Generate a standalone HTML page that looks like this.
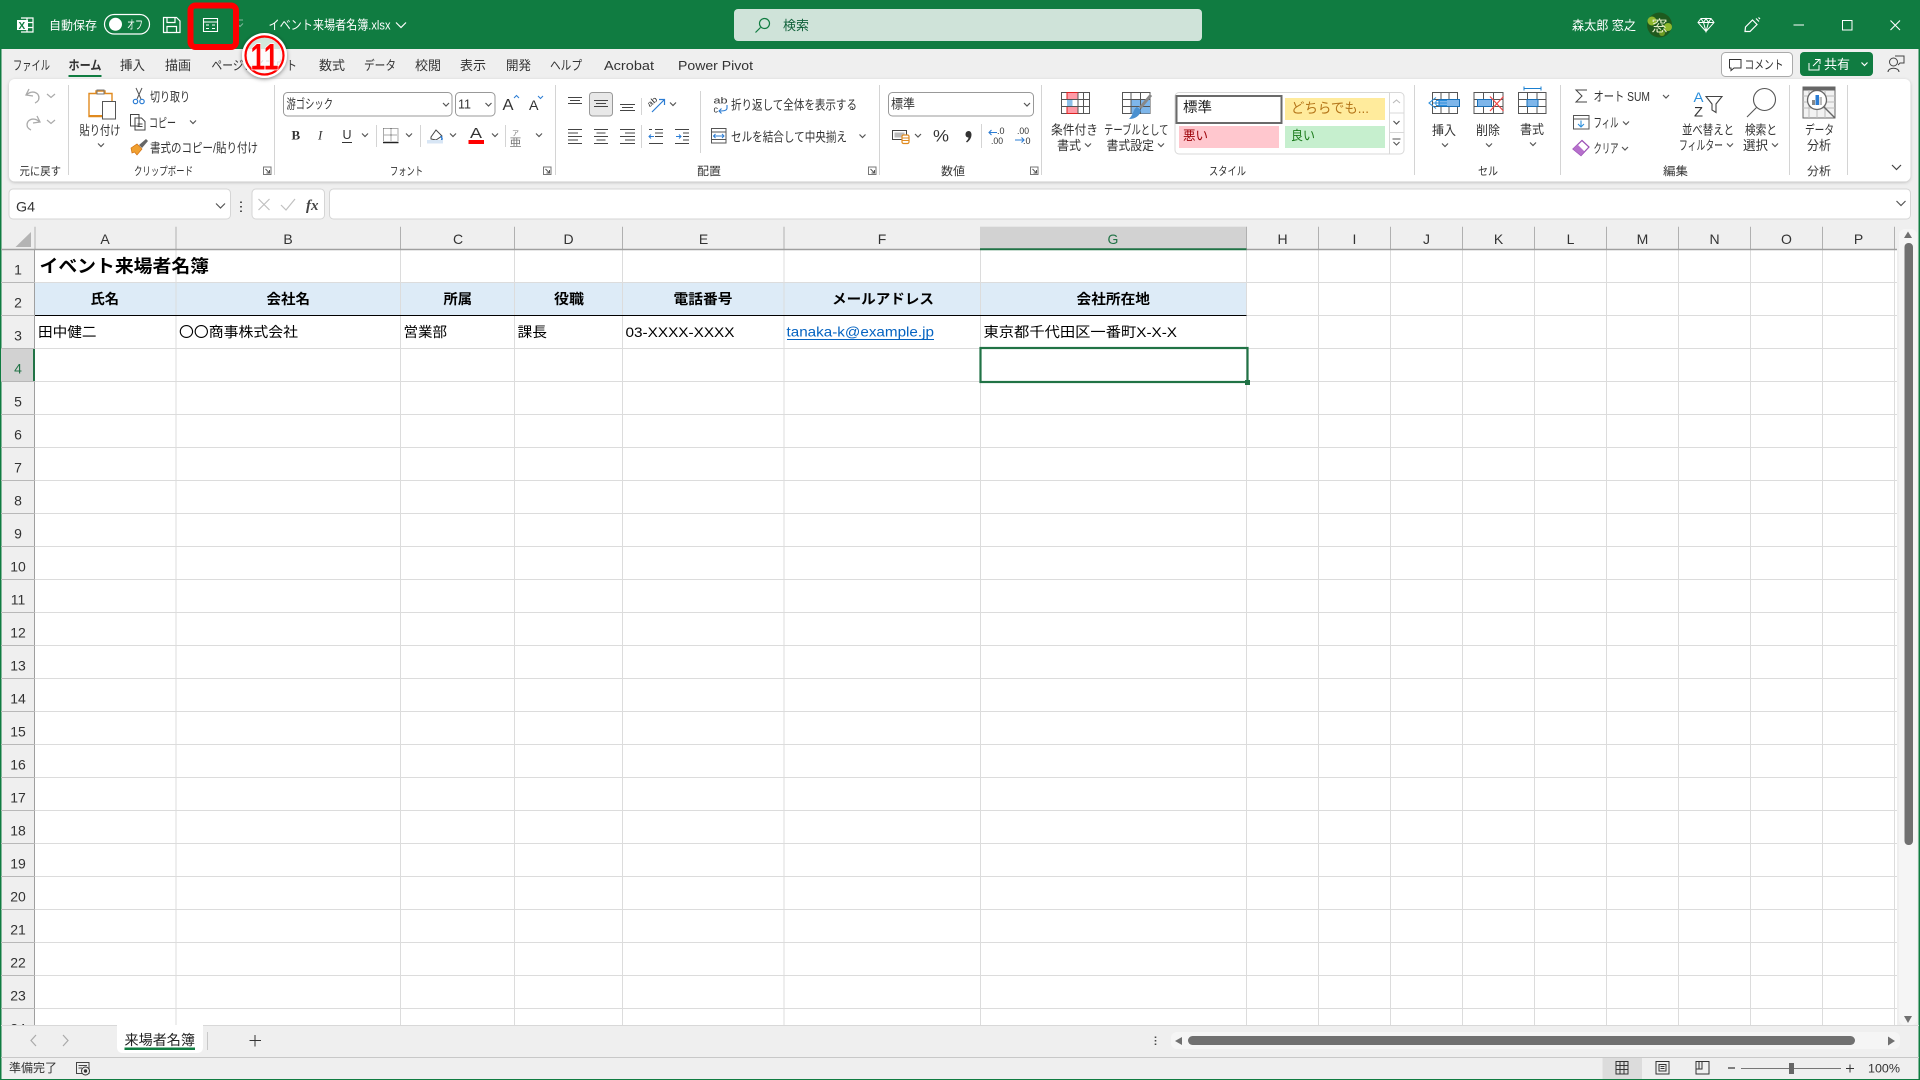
<!DOCTYPE html>
<html lang="ja"><head><meta charset="utf-8"><title>イベント来場者名簿.xlsx - Excel</title>
<style>
html,body{margin:0;padding:0;width:1920px;height:1080px;overflow:hidden;background:#efefef}
svg{display:block;position:absolute;left:0;top:0}
text{font-family:"Liberation Sans","Noto Sans CJK JP",sans-serif;font-size:13px;fill:#333}
.w text{fill:#fff}
.c text{fill:#000;font-size:14px}
.b text{font-weight:bold}
.h text{fill:#333;font-size:14px;text-anchor:middle}
.ic{fill:none;stroke:#555;stroke-width:1}
.chev{fill:none;stroke:#555;stroke-width:1.2}
.g text{font-size:11.5px}
</style></head><body>
<svg width="1920" height="1080" viewBox="0 0 1920 1080">
<defs>
<path id="c" class="chev" d="M-3-1.5 0 1.5 3-1.5"/>
<g id="launch"><path d="M.5.5H8V8H.5Z" fill="none" stroke="#777" stroke-width="1"/><path d="M2.500 2.500 6.500 6.500M3.500 6.500H6.500V3.500" fill="none" stroke="#555"/></g>
<filter id="sh" x="-30%" y="-30%" width="160%" height="160%"><feDropShadow dx="0" dy="1" stdDeviation="2" flood-color="#000" flood-opacity=".45"/></filter>
<filter id="rs" x="-5%" y="-20%" width="110%" height="140%"><feDropShadow dx="0" dy="1" stdDeviation="1.5" flood-color="#000" flood-opacity=".22"/></filter>
</defs>

<!-- frame / chrome -->
<rect width="1920" height="1080" fill="#efefef"/>
<rect width="1920" height="49" fill="#107c41"/>
<rect x="0" y="49" width="1.5" height="1031" fill="#107c41"/>
<rect x="1918.5" y="49" width="1.5" height="1031" fill="#107c41"/>
<rect y="1079" width="1920" height="1" fill="#107c41"/>

<!-- title bar -->
<g class="w">
<g fill="none" stroke="#fff" stroke-width="1.2"><path d="M21 18H33V32H21M27 18V32M27 22.5H33M27 27.5H33"/></g>
<rect x="17" y="20" width="11" height="10" fill="#fff"/><text x="18.5" y="29" style="fill:#107c41;font-size:10px;font-weight:bold">X</text>
<text x="49" y="29.5" textLength="48" lengthAdjust="spacingAndGlyphs" style="font-size:12px">自動保存</text>
<rect x="104.5" y="14.5" width="45" height="19.5" rx="9.7" fill="none" stroke="#fff" stroke-width="1.2"/>
<circle cx="115.5" cy="24.3" r="6.5" fill="#fff"/>
<text x="127" y="29" textLength="16" lengthAdjust="spacingAndGlyphs" style="font-size:12px">オフ</text>
<path d="M163.5 17.5H176.5L180 21V32.5H163.5ZM167 32.5V26.5H176.500V32.5M167 17.500V22.500H175V17.500" fill="none" stroke="#fff" stroke-width="1.200"/>
<path d="M203.500 18.500H217.500V31.500H203.500ZM203.500 22H217.500M206 25H209M212 25H215M206 28.500H209M212 28.500H215" fill="none" stroke="#fff" stroke-width="1.100"/>
<path d="M237 23.500 240 26.500 243 23.500M237 20H243" fill="none" stroke="#7fb89b" stroke-width="1"/>
<text x="268.500" y="29.500" textLength="122" lengthAdjust="spacingAndGlyphs">イベント来場者名簿.xlsx</text>
<path d="M396 22.500 401 27.500 406 22.500" fill="none" stroke="#fff" stroke-width="1.200"/>
</g>
<rect x="734" y="9" width="468" height="32" rx="4" fill="#cfe3d9"/>
<circle cx="764.500" cy="23.500" r="5" fill="none" stroke="#107c41" stroke-width="1.200"/><path d="M760.500 27.500 755.500 32.500" stroke="#107c41" stroke-width="1.200"/>
<text x="783" y="30" textLength="26" lengthAdjust="spacingAndGlyphs" style="fill:#10613a">検索</text>
<g class="w">
<text x="1572" y="30" textLength="64" lengthAdjust="spacingAndGlyphs">森太郎 窓之</text>
</g>
<circle cx="1659.500" cy="25" r="12.500" fill="#1e5a1e"/><circle cx="1652" cy="21" r="4.500" fill="#8db82e"/><circle cx="1668" cy="27" r="4" fill="#8db82e"/><circle cx="1662" cy="33" r="3" fill="#6b9a22"/>
<text x="1651.500" y="31" textLength="16" lengthAdjust="spacingAndGlyphs" style="fill:#e6efc8;font-size:15px">窓</text>
<path d="M1701 18.500H1711L1714 22.500 1706 31.500 1698 22.500ZM1698 22.500H1714M1703.500 22.500 1706 31.500 1708.500 22.500M1701 18.500 1703.500 22.500 1706 18.500 1708.500 22.500 1711 18.500" fill="none" stroke="#fff" stroke-width="1"/>
<path d="M1745 31.500 1745.500 27 1752.500 20 1757 24.500 1750 31.500ZM1756 18.500 1759 21.500M1758.500 17.500 1760 19" fill="none" stroke="#fff" stroke-width="1.200"/>
<path d="M1793.500 25H1804" stroke="#fff" stroke-width="1"/>
<rect x="1842.500" y="20.500" width="9.500" height="9.500" fill="none" stroke="#fff" stroke-width="1"/>
<path d="M1890.500 20.500 1900 30M1900 20.500 1890.500 30" stroke="#fff" stroke-width="1.100"/>

<!-- tabs -->
<g>
<text x="13" y="70" textLength="37" lengthAdjust="spacingAndGlyphs">ファイル</text>
<text x="68.500" y="70" textLength="33" lengthAdjust="spacingAndGlyphs" style="font-weight:bold">ホーム</text>
<rect x="68.500" y="75" width="33" height="2" fill="#107c41"/>
<text x="120" y="70" textLength="25" lengthAdjust="spacingAndGlyphs">挿入</text>
<text x="165" y="70" textLength="26" lengthAdjust="spacingAndGlyphs">描画</text>
<text x="211.500" y="70" textLength="85.500" lengthAdjust="spacingAndGlyphs">ページレイアウト</text>
<text x="319" y="70" textLength="26" lengthAdjust="spacingAndGlyphs">数式</text>
<text x="364" y="70" textLength="32" lengthAdjust="spacingAndGlyphs">データ</text>
<text x="415" y="70" textLength="26" lengthAdjust="spacingAndGlyphs">校閲</text>
<text x="460" y="70" textLength="26" lengthAdjust="spacingAndGlyphs">表示</text>
<text x="506" y="70" textLength="25" lengthAdjust="spacingAndGlyphs">開発</text>
<text x="550" y="70" textLength="32" lengthAdjust="spacingAndGlyphs">ヘルプ</text>
<text x="604" y="70" textLength="50" lengthAdjust="spacingAndGlyphs">Acrobat</text>
<text x="678" y="70" textLength="75" lengthAdjust="spacingAndGlyphs">Power Pivot</text>
</g>
<rect x="1721.500" y="52.500" width="71" height="24" rx="4" fill="#fff" stroke="#aaa"/>
<path d="M1729.500 59.500H1741V68H1734L1731 70.500V68H1729.500Z" fill="none" stroke="#333"/>
<text x="1744.500" y="69" textLength="39" lengthAdjust="spacingAndGlyphs" style="font-size:12.500px">コメント</text>
<rect x="1800" y="52" width="73" height="24" rx="4" fill="#107c41"/>
<path d="M1809 63V70H1819V65M1813 66 1819 60M1815 59.500H1820V64" fill="none" stroke="#fff"/>
<text x="1824" y="69" textLength="26" lengthAdjust="spacingAndGlyphs" style="fill:#fff">共有</text>
<path d="M1861.500 62.500 1864.500 65.500 1867.500 62.500" fill="none" stroke="#fff" stroke-width="1.200"/>
<circle cx="1893.500" cy="62" r="4" fill="none" stroke="#444"/><path d="M1888 72C1888 67 1899 67 1899 72" fill="none" stroke="#444"/><path d="M1895 56H1904V63H1900L1898 65" fill="none" stroke="#444"/>

<!-- ribbon -->
<rect x="9" y="79" width="1901.500" height="102.500" rx="6" fill="#fff" filter="url(#rs)"/>
<g stroke="#d4d4d4" stroke-width="1">
<path d="M68.500 85V175M274.500 85V175M555.500 85V175M879.500 85V175M1041.500 85V175M1414.500 85V175M1560.500 85V175M1789.500 85V175M1847.500 85V175"/>
<path d="M376.500 125V147M420.500 125V147M505.500 125V147M641.500 98V115M641.500 125V148M700.500 91V153M981.500 124V148"/>
</g>
<g class="g">
<text x="19.500" y="175" textLength="41.500" lengthAdjust="spacingAndGlyphs">元に戻す</text>
<text x="134" y="175" textLength="59" lengthAdjust="spacingAndGlyphs">クリップボード</text>
<text x="390" y="175" textLength="33" lengthAdjust="spacingAndGlyphs">フォント</text>
<text x="697" y="175" textLength="24" lengthAdjust="spacingAndGlyphs">配置</text>
<text x="941" y="175" textLength="24" lengthAdjust="spacingAndGlyphs">数値</text>
<text x="1209" y="175" textLength="37" lengthAdjust="spacingAndGlyphs">スタイル</text>
<text x="1478" y="175" textLength="20" lengthAdjust="spacingAndGlyphs">セル</text>
<text x="1663" y="175" textLength="25" lengthAdjust="spacingAndGlyphs">編集</text>
<text x="1807" y="175" textLength="24" lengthAdjust="spacingAndGlyphs">分析</text>
</g>
<use href="#launch" x="263" y="166.500"/><use href="#launch" x="543" y="166.500"/><use href="#launch" x="868" y="166.500"/><use href="#launch" x="1030" y="166.500"/>

<!-- undo group -->
<path d="M29 89 26 95 33 96M26.500 95C32 89 41 93 38.500 100 37.500 102 36 102.500 35 103" fill="none" stroke="#aaa" stroke-width="1.300"/>
<path d="M37 116 40 122 33 123M39.500 122C34 116 25 120 27.500 127 28.500 129 30 129.500 31 130" fill="none" stroke="#aaa" stroke-width="1.300"/>
<path d="M47 94 51 97.500 55 94M47 120 51 123.500 55 120" fill="none" stroke="#aaa" stroke-width="1.200"/>

<!-- clipboard -->
<path d="M89 93.500H96V91H105V93.500H112V102H103V116.500H89Z" fill="#fff" stroke="#e08a1e" stroke-width="1.400"/>
<rect x="88.500" y="115" width="15" height="1.800" fill="#e08a1e"/>
<path d="M97 90H104V94H97Z" fill="none" stroke="#777"/>
<rect x="102.500" y="101.500" width="13" height="17.500" fill="#fff" stroke="#555"/>
<text x="79.500" y="135" textLength="41" lengthAdjust="spacingAndGlyphs">貼り付け</text>
<use href="#c" x="101" y="145"/>
<path d="M136 88 141 99M142 88 137 99" stroke="#555" fill="none"/><circle cx="135.500" cy="101.500" r="2.200" fill="none" stroke="#2b7cd3" stroke-width="1.200"/><circle cx="142" cy="101.500" r="2.200" fill="none" stroke="#2b7cd3" stroke-width="1.200"/>
<text x="150" y="101.500" textLength="40" lengthAdjust="spacingAndGlyphs">切り取り</text>
<path d="M130.500 114.500H139V126H130.500ZM135 118H141.500L145 121.500V130H135Z" fill="#fff" stroke="#444"/><path d="M137.500 124H142.500M137.500 126.500H142.500" stroke="#444"/>
<text x="149" y="127.500" textLength="27" lengthAdjust="spacingAndGlyphs">コピー</text>
<use href="#c" x="193" y="122"/>
<path d="M139 145 146 139 148 141 142 148Z" fill="#666"/><path d="M131 148 137 144 142 149 137 155 134.500 152 132 153Z" fill="#f0a030" stroke="#d07010" stroke-width=".7"/>
<text x="150" y="152.500" textLength="108" lengthAdjust="spacingAndGlyphs">書式のコピー/貼り付け</text>

<!-- font -->
<rect x="283.500" y="92.500" width="168.500" height="23.500" rx="4" fill="#fff" stroke="#999"/>
<text x="286.500" y="108.500" textLength="46.500" lengthAdjust="spacingAndGlyphs">游ゴシック</text>
<use href="#c" x="446" y="104.500"/>
<rect x="455.500" y="92.500" width="39.500" height="23.500" rx="4" fill="#fff" stroke="#999"/>
<text x="458" y="108.500" textLength="13" lengthAdjust="spacingAndGlyphs">11</text>
<use href="#c" x="488.500" y="104.500"/>
<text x="502.500" y="110" textLength="11" lengthAdjust="spacingAndGlyphs" style="font-size:16px">A</text>
<path d="M514 98 516.500 95.500 519 98" fill="none" stroke="#2b7cd3"/>
<text x="529" y="110" textLength="9.500" lengthAdjust="spacingAndGlyphs" style="font-size:13.500px">A</text>
<path d="M538 96 540.500 98.500 543 96" fill="none" stroke="#2b7cd3"/>
<text x="291.500" y="139.500" style="font-size:13px;font-weight:bold;font-family:'Liberation Serif',serif">B</text>
<text x="318" y="139.500" style="font-size:13px;font-style:italic;font-family:'Liberation Serif',serif">I</text>
<text x="342.500" y="139" style="font-size:12.500px">U</text><path d="M342 142.500H352" stroke="#333"/>
<use href="#c" x="365" y="135"/>
<path d="M383.500 128.500H398M383.500 128.500V141M398 128.500V141M391 128.500V141M383.500 135H398" stroke="#555" stroke-dasharray="1 1" fill="none"/><path d="M383 142.500H398.500" stroke="#222" stroke-width="1.500"/>
<use href="#c" x="409" y="135"/>
<path d="M431 137 436 130 442 136 436 140 431 139Z" fill="#fff" stroke="#444"/><path d="M440.500 136C442.500 138 442.500 139.500 441 140" fill="none" stroke="#2b7cd3" stroke-width="1.500"/><rect x="427" y="140" width="16" height="3.500" fill="#d8e6f5"/>
<use href="#c" x="453" y="135"/>
<text x="470" y="138" textLength="12" lengthAdjust="spacingAndGlyphs" style="font-size:15px">A</text><rect x="468.500" y="140" width="15.500" height="4" fill="#f00"/>
<use href="#c" x="495" y="135"/>
<text x="512" y="135.500" style="font-size:7px;fill:#777">ア</text><text x="509.500" y="146" textLength="12" style="font-size:11px;fill:#777" lengthAdjust="spacingAndGlyphs">亜</text>
<use href="#c" x="539" y="135"/>

<!-- alignment -->
<rect x="589.500" y="92.500" width="23" height="23.500" rx="3" fill="#e8e8e8" stroke="#999"/>
<g stroke="#444" stroke-width="1"><path d="M568 97.500H582M570 100.500H580M568 103.500H582"/><path d="M594 100.500H608M596 103.500H606M594 106.500H608"/><path d="M620 104.500H635M622 107.500H633M620 110.500H635"/>
<path d="M568 129.500H582M568 133H578M568 136.500H582M568 140H578M568 143.500H582"/><path d="M594 129.500H608M596.500 133H605.500M594 136.500H608M596.500 140H605.500M594 143.500H608"/><path d="M620 129.500H635M625 133H635M620 136.500H635M625 140H635M620 143.500H635"/>
<path d="M655 129.500H663M655 133H663M655 136.500H663M649 143.500H663M649 129.500H652M675 129.500H689M683 133H689M683 136.500H689M683 140H689M675 143.500H689"/></g>
<path d="M649 136.500H654M651 134.500 649 136.500 651 138.500M676 136.500H681M679 134.500 681 136.500 679 138.500" fill="none" stroke="#2b7cd3"/>
<text x="648" y="105" transform="rotate(-40 652 104)" style="font-size:8px" textLength="11" lengthAdjust="spacingAndGlyphs">ab</text>
<path d="M652 112 664 100M659 99.500H664.500V105" fill="none" stroke="#2b7cd3" stroke-width="1.200"/>
<use href="#c" x="673" y="104"/>
<text x="713.500" y="103.500" style="font-size:9px" textLength="14" lengthAdjust="spacingAndGlyphs">ab</text><text x="713.500" y="112.500" style="font-size:9px">c</text>
<path d="M727 105V108C727 111 723 111 719 111M721.500 108.500 719 111 721.500 113.500" fill="none" stroke="#2b7cd3" stroke-width="1.100"/>
<text x="731" y="109.500" textLength="126" lengthAdjust="spacingAndGlyphs">折り返して全体を表示する</text>
<rect x="711.500" y="128.500" width="14.500" height="14.500" fill="none" stroke="#555"/><path d="M711.500 132H726M711.500 139.500H726" stroke="#555"/><path d="M713.500 136H724M715.500 134 713.500 136 715.500 138M722 134 724 136 722 138" fill="none" stroke="#2b7cd3"/>
<text x="731" y="141.500" textLength="116" lengthAdjust="spacingAndGlyphs">セルを結合して中央揃え</text>
<use href="#c" x="862.500" y="136"/>

<!-- number -->
<rect x="888.500" y="92.500" width="145" height="23.500" rx="4" fill="#fff" stroke="#999"/>
<text x="891" y="108.500" textLength="24" lengthAdjust="spacingAndGlyphs">標準</text>
<use href="#c" x="1027" y="104.500"/>
<rect x="892.500" y="130.500" width="14" height="9" fill="none" stroke="#444"/><rect x="894.500" y="132.500" width="10" height="5" fill="#bbb"/><rect x="902" y="135" width="7" height="8.500" rx="1.500" fill="#fff" stroke="#e08a1e" stroke-width="1.200"/><path d="M902 138H909M902 140.500H909" stroke="#e08a1e"/>
<use href="#c" x="918" y="135.500"/>
<text x="933" y="141.500" textLength="16" lengthAdjust="spacingAndGlyphs" style="font-size:17px">%</text>
<path d="M967 131.500C969.500 130 971.500 132 971.500 134.500 971.500 138 969.500 140.500 967 142.500L966 141.500C967.500 140 968.500 139 968.500 137.500 966.500 137.500 965.500 136 965.500 134.500 965.500 133 966 132 967 131.500Z" fill="#333"/>
<path d="M989 132.500H997M991.500 130 989 132.500 991.500 135M1015 140H1024M1021.500 137.500 1024 140 1021.500 142.500" fill="none" stroke="#2b7cd3" stroke-width="1.100"/>
<text x="997" y="134" style="font-size:9px">.0</text><text x="991" y="144" style="font-size:9px" textLength="12" lengthAdjust="spacingAndGlyphs">.00</text>
<text x="1017" y="134" style="font-size:9px" textLength="12" lengthAdjust="spacingAndGlyphs">.00</text><text x="1023" y="144" style="font-size:9px">.0</text>

<!-- conditional & table -->
<g>
<rect x="1061.500" y="92.500" width="28" height="21" fill="#fff" stroke="#555"/>
<rect x="1067" y="92.500" width="11" height="7" fill="#ff9aa6" stroke="#d22"/><rect x="1067" y="99.500" width="5.500" height="7" fill="#8cc0ea"/><rect x="1067" y="106.500" width="11" height="7" fill="#ff9aa6" stroke="#d22"/>
<path d="M1078 92.500V113.500M1083.500 92.500V113.500M1061.500 99.500H1089.500M1061.500 106.500H1089.500" stroke="#555" fill="none"/>
<text x="1051" y="134.500" textLength="47" lengthAdjust="spacingAndGlyphs">条件付き</text>
<text x="1057" y="150" textLength="24" lengthAdjust="spacingAndGlyphs">書式</text><use href="#c" x="1088" y="145"/>
<rect x="1122.500" y="92.500" width="27.500" height="21" fill="#fff" stroke="#555"/>
<rect x="1131" y="99.500" width="19" height="14" fill="#7eb6ea"/>
<path d="M1131 92.500V113.500M1140.500 92.500V113.500M1122.500 99.500H1150M1122.500 106.500H1150" stroke="#555" fill="none"/>
<path d="M1140 108 1151 95" stroke="#888" stroke-width="3"/><path d="M1129 119C1135 119 1140 116 1141 110L1137 107C1133 109 1134 114 1129 119Z" fill="#4a90d0"/>
<text x="1104" y="134.500" textLength="64.500" lengthAdjust="spacingAndGlyphs">テーブルとして</text>
<text x="1106.500" y="150" textLength="47.500" lengthAdjust="spacingAndGlyphs">書式設定</text><use href="#c" x="1161" y="145"/>
</g>
<!-- styles gallery -->
<rect x="1175" y="92.500" width="229" height="61.500" rx="4" fill="#fff" stroke="#d8d8d8"/>
<rect x="1176.500" y="96" width="105" height="27" fill="#fff" stroke="#6a6a6a" stroke-width="2"/>
<text x="1183" y="112" textLength="29" lengthAdjust="spacingAndGlyphs" style="font-size:14px;fill:#222">標準</text>
<rect x="1179" y="126" width="100" height="22" fill="#ffc7ce"/>
<text x="1183" y="140" textLength="25" lengthAdjust="spacingAndGlyphs" style="fill:#9c0006">悪い</text>
<rect x="1285" y="98" width="100" height="22" fill="#ffeb9c"/>
<text x="1291" y="113" textLength="78" lengthAdjust="spacingAndGlyphs" style="fill:#b5761a;font-size:14px">どちらでも...</text>
<rect x="1285" y="126" width="100" height="22" fill="#c6efce"/>
<text x="1291" y="140" textLength="24" lengthAdjust="spacingAndGlyphs" style="fill:#1a7a1a">良い</text>
<path d="M1389.500 92.500V154M1389.500 113H1404M1389.500 132.500H1404" stroke="#d8d8d8" fill="none"/>
<path d="M1393 103 1396.500 100 1400 103" stroke="#bbb" fill="none" stroke-width="1.100"/>
<use href="#c" x="1396.500" y="122.500"/>
<path d="M1392.500 139H1400.500M1393.500 142 1396.500 145 1399.500 142" stroke="#555" fill="none" stroke-width="1.100"/>

<!-- cells group -->
<g fill="none" stroke="#555">
<path d="M1432.500 92.500H1457.500V113.500H1432.500ZM1441 92.500V113.500M1449 92.500V113.500M1432.500 99.500H1457.500M1432.500 106.500H1457.500"/>
<rect x="1439" y="99.500" width="20.500" height="7" fill="#7eb6ea" stroke="#1a6fb5"/>
<path d="M1447 103H1433M1436 97.500 1429 103 1436 108.500M1436 101V105M1436 100.500H1447M1436 105.500H1447" stroke="#2b8fdc" stroke-width="1.100"/>
<path d="M1474 92.500H1503V113.500H1474ZM1483.500 92.500V113.500M1493.500 92.500V113.500M1474 99.500H1503M1474 106.500H1503"/>
<rect x="1477.500" y="99.500" width="14" height="7" fill="#7eb6ea" stroke="#1a6fb5"/>
<path d="M1490 96.500 1503.500 111M1503.500 96.500 1490 111" stroke="#f04545" stroke-width="1.200"/>
<path d="M1518.500 92.500H1546V113.500H1518.500ZM1527.500 92.500V113.500M1537 92.500V113.500M1518.500 99.500H1546M1518.500 106.500H1546"/>
<rect x="1527" y="99.500" width="11" height="7" fill="#7eb6ea" stroke="#1a6fb5"/>
<path d="M1524 88.500H1541M1524 86.500V90.500M1541 86.500V90.500" stroke="#1a7fd0"/>
</g>
<text x="1432" y="135" textLength="24" lengthAdjust="spacingAndGlyphs">挿入</text><use href="#c" x="1445" y="145"/>
<text x="1476" y="135" textLength="24" lengthAdjust="spacingAndGlyphs">削除</text><use href="#c" x="1489" y="145"/>
<text x="1520" y="134" textLength="24" lengthAdjust="spacingAndGlyphs">書式</text><use href="#c" x="1533" y="144"/>

<!-- edit group -->
<path d="M1587 90H1576L1582 96 1576 102H1587" fill="none" stroke="#444"/>
<text x="1593.500" y="101" textLength="56.500" lengthAdjust="spacingAndGlyphs">オート SUM</text><use href="#c" x="1666" y="96.500"/>
<rect x="1573.500" y="115.500" width="15.500" height="13.500" fill="none" stroke="#555"/><path d="M1573.500 119H1589" stroke="#555"/><path d="M1581 120.500V127M1578 124 1581 127 1584 124" fill="none" stroke="#2b8fdc" stroke-width="1.100"/>
<text x="1593.500" y="127.500" textLength="25" lengthAdjust="spacingAndGlyphs">フィル</text><use href="#c" x="1626" y="123"/>
<path d="M1573 149 1582 140.500 1589 147 1581 155.500Z" fill="#fff" stroke="#9b4fb5" stroke-width="1.200"/><path d="M1573 149 1577.500 144.500 1584.500 151.500 1581 155.500Z" fill="#b670cc"/>
<text x="1593.500" y="153" textLength="25" lengthAdjust="spacingAndGlyphs">クリア</text><use href="#c" x="1625" y="148.500"/>
<text x="1693.500" y="102" textLength="10" lengthAdjust="spacingAndGlyphs" style="font-size:14px;fill:#2b8fdc">A</text>
<text x="1694" y="116.500" textLength="9" lengthAdjust="spacingAndGlyphs" style="font-size:14px;fill:#333">Z</text>
<path d="M1706 96.500H1722L1716 104V112.500L1712 110V104Z" fill="none" stroke="#444" stroke-width="1.100"/>
<text x="1682" y="134.500" textLength="52" lengthAdjust="spacingAndGlyphs">並べ替えと</text>
<text x="1679" y="150" textLength="44" lengthAdjust="spacingAndGlyphs">フィルター</text><use href="#c" x="1730" y="145"/>
<circle cx="1764.500" cy="99.500" r="11" fill="none" stroke="#555" stroke-width="1.100"/><path d="M1756.500 107.500 1747 117" stroke="#555" stroke-width="1.100"/>
<text x="1745" y="134.500" textLength="32" lengthAdjust="spacingAndGlyphs">検索と</text>
<text x="1743" y="150" textLength="25" lengthAdjust="spacingAndGlyphs">選択</text><use href="#c" x="1775" y="145"/>
<!-- analysis -->
<rect x="1803" y="87" width="32" height="31" fill="#f2f2f2" stroke="#666"/><rect x="1803" y="87" width="32" height="3.500" fill="#666"/>
<path d="M1803 96H1835M1803 102H1835M1803 108H1835M1809 90V118M1817 90V118M1825 90V118" stroke="#bbb"/>
<circle cx="1817" cy="100" r="9.500" fill="#fff" stroke="#666" stroke-width="1.300"/>
<rect x="1812" y="100" width="3" height="5" fill="#888"/><rect x="1815.500" y="95" width="3.500" height="10" fill="#2b7cd3"/><rect x="1819.500" y="97" width="2.500" height="8" fill="#bbb"/>
<path d="M1824 107 1835 118" stroke="#666" stroke-width="1.400"/>
<text x="1805" y="134.500" textLength="29" lengthAdjust="spacingAndGlyphs">データ</text>
<text x="1807" y="150" textLength="24" lengthAdjust="spacingAndGlyphs">分析</text>
<path d="M1892 165 1896.500 169.500 1901 165" fill="none" stroke="#444" stroke-width="1.200"/>

<!-- formula bar -->
<rect x="9" y="189" width="221.500" height="30" rx="4" fill="#fff" stroke="#d5d5d5"/>
<text x="16" y="211.500" textLength="19" lengthAdjust="spacingAndGlyphs" style="font-size:14px">G4</text>
<path d="M216 203.500 220.500 208 225 203.500" fill="none" stroke="#555" stroke-width="1.200"/>
<path d="M241 201.500V203M241 206V207.500M241 210.500V212" stroke="#444" stroke-width="1.800"/>
<rect x="252" y="189" width="72.500" height="30" rx="4" fill="#fff" stroke="#d5d5d5"/>
<path d="M258.500 199 269.500 210M269.500 199 258.500 210" stroke="#c0c0c0" stroke-width="1.200"/>
<path d="M281 205 286 210 295 199" fill="none" stroke="#c0c0c0" stroke-width="1.200"/>
<text x="306" y="210" style="font-family:'Liberation Serif',serif;font-style:italic;font-weight:bold;font-size:15px;fill:#444">fx</text>
<rect x="329.500" y="189" width="1581" height="30" rx="4" fill="#fff" stroke="#d5d5d5"/>
<path d="M1896.500 201 1901 205.500 1905.500 201" fill="none" stroke="#555" stroke-width="1.200"/>

<!-- sheet -->
<rect x="35" y="250" width="1862" height="775" fill="#fff"/>
<rect x="35" y="283" width="1211.500" height="32" fill="#ddebf7"/>
<rect x="1" y="348.500" width="34" height="33" fill="#d2d2d2"/>
<rect x="980" y="226.700" width="266.500" height="23.300" fill="#d2d2d2"/>
<!-- grid -->
<path d="M176 250V1025M400.500 250V1025M514.500 250V1025M622.500 250V1025M784 250V1025M980.500 250V1025M1246.500 250V1025M1318.500 250V1025M1390.500 250V1025M1462.500 250V1025M1534.500 250V1025M1606.500 250V1025M1678.500 250V1025M1750.500 250V1025M1822.500 250V1025M1894.500 250V1025" stroke="#dcdcdc" stroke-width="1" fill="none"/>
<path d="M35 282.500H1897M1246 315.500H1897M35 348.500H1897M35 381.500H1897M35 414.500H1897M35 447.500H1897M35 480.500H1897M35 513.500H1897M35 546.500H1897M35 579.500H1897M35 612.500H1897M35 645.500H1897M35 678.500H1897M35 711.500H1897M35 744.500H1897M35 777.500H1897M35 810.500H1897M35 843.500H1897M35 876.500H1897M35 909.500H1897M35 942.500H1897M35 975.500H1897M35 1008.500H1897" stroke="#dcdcdc" stroke-width="1" fill="none"/>
<path d="M35 315.500H1246.500" stroke="#000" stroke-width="1"/>
<!-- headers -->
<path d="M35 250V226.700M176 226.700V250M400.500 226.700V250M514.500 226.700V250M622.500 226.700V250M784 226.700V250M1246.500 226.700V250M1318.500 226.700V250M1390.500 226.700V250M1462.500 226.700V250M1534.500 226.700V250M1606.500 226.700V250M1678.500 226.700V250M1750.500 226.700V250M1822.500 226.700V250M1894.500 226.700V250" stroke="#b0b0b0" fill="none"/>
<path d="M1 249.500H980M1246.500 249.500H1897" stroke="#9f9f9f" stroke-width="1.500"/>
<path d="M980 249.300H1246.500" stroke="#217346" stroke-width="2"/>
<path d="M34.500 250V1025" stroke="#9f9f9f"/>
<path d="M34 348.500V381.500" stroke="#217346" stroke-width="2"/>
<path d="M1 282.500H35M1 315.500H35M1 348.500H35M1 381.500H35M1 414.500H35M1 447.500H35M1 480.500H35M1 513.500H35M1 546.500H35M1 579.500H35M1 612.500H35M1 645.500H35M1 678.500H35M1 711.500H35M1 744.500H35M1 777.500H35M1 810.500H35M1 843.500H35M1 876.500H35M1 909.500H35M1 942.500H35M1 975.500H35M1 1008.500H35" stroke="#b8b8b8"/>
<path d="M31 232V247H15.500Z" fill="#b4b4b4"/>
<g class="h">
<text x="105" y="244">A</text><text x="288" y="244">B</text><text x="458" y="244">C</text><text x="568.500" y="244">D</text><text x="703.500" y="244">E</text><text x="882" y="244">F</text><text x="1113" y="244" style="fill:#217346">G</text>
<text x="1282.500" y="244">H</text><text x="1354.500" y="244">I</text><text x="1426.500" y="244">J</text><text x="1498.500" y="244">K</text><text x="1570.500" y="244">L</text><text x="1642.500" y="244">M</text><text x="1714.500" y="244">N</text><text x="1786.500" y="244">O</text><text x="1858.500" y="244">P</text>
<text x="18" y="274.500">1</text><text x="18" y="307.500">2</text><text x="18" y="340.500">3</text><text x="18" y="373.500" style="fill:#217346">4</text><text x="18" y="406.500">5</text><text x="18" y="439.500">6</text><text x="18" y="472.500">7</text><text x="18" y="505.500">8</text><text x="18" y="538.500">9</text><text x="18" y="571.500">10</text><text x="18" y="604.500">11</text><text x="18" y="637.500">12</text><text x="18" y="670.500">13</text><text x="18" y="703.500">14</text><text x="18" y="736.500">15</text><text x="18" y="769.500">16</text><text x="18" y="802.500">17</text><text x="18" y="835.500">18</text><text x="18" y="868.500">19</text><text x="18" y="901.500">20</text><text x="18" y="934.500">21</text><text x="18" y="967.500">22</text><text x="18" y="1000.500">23</text><text x="18" y="1033.500">24</text>
</g>
<!-- cell contents -->
<text x="39.500" y="272.500" textLength="169.500" lengthAdjust="spacingAndGlyphs" style="font-size:18px;font-weight:bold;fill:#000">イベント来場者名簿</text>
<g class="c b">
<text x="90.500" y="304" textLength="28.500" lengthAdjust="spacingAndGlyphs">氏名</text>
<text x="266.500" y="304" textLength="43.500" lengthAdjust="spacingAndGlyphs">会社名</text>
<text x="443.500" y="304" textLength="28.500" lengthAdjust="spacingAndGlyphs">所属</text>
<text x="554" y="304" textLength="30" lengthAdjust="spacingAndGlyphs">役職</text>
<text x="673.500" y="304" textLength="59" lengthAdjust="spacingAndGlyphs">電話番号</text>
<text x="832" y="304" textLength="102" lengthAdjust="spacingAndGlyphs">メールアドレス</text>
<text x="1076.500" y="304" textLength="73.500" lengthAdjust="spacingAndGlyphs">会社所在地</text>
</g>
<g class="c">
<text x="38" y="337" textLength="58.500" lengthAdjust="spacingAndGlyphs">田中健二</text>
<text x="179" y="337" textLength="119" lengthAdjust="spacingAndGlyphs">〇〇商事株式会社</text>
<text x="403.500" y="337" textLength="43.500" lengthAdjust="spacingAndGlyphs">営業部</text>
<text x="517.500" y="337" textLength="29.500" lengthAdjust="spacingAndGlyphs">課長</text>
<text x="625.500" y="337" textLength="109" lengthAdjust="spacingAndGlyphs">03-XXXX-XXXX</text>
<text x="786.500" y="336.500" textLength="147.500" lengthAdjust="spacingAndGlyphs" style="fill:#0563c1">tanaka-k@example.jp</text>
<text x="983.500" y="337" textLength="193.500" lengthAdjust="spacingAndGlyphs">東京都千代田区一番町X-X-X</text>
</g>
<path d="M787 339.500H934" stroke="#0563c1"/>
<rect x="980.500" y="348" width="267" height="34" fill="none" stroke="#217346" stroke-width="2.200"/>
<rect x="1245" y="380" width="5" height="5" fill="#217346"/>

<!-- vertical scrollbar -->
<rect x="1897" y="226" width="21.500" height="799" fill="#efefef"/>
<rect x="1899" y="229" width="18" height="796" rx="6" fill="#f5f5f5"/>
<path d="M1908 231.500 1912 238H1904Z" fill="#707070"/>
<rect x="1904.500" y="243" width="8.500" height="602" rx="4" fill="#707070"/>
<path d="M1908 1023 1904 1016H1912Z" fill="#707070"/>

<!-- sheet tabs -->
<rect x="1.500" y="1025" width="1917" height="32" fill="#efefef"/>
<path d="M1 1025.500H1919" stroke="#d8d8d8"/>
<path d="M36 1035 31 1040.500 36 1046M63 1035 68 1040.500 63 1046" fill="none" stroke="#aaa" stroke-width="1.200"/>
<path d="M117 1025H203V1047Q203 1053 197 1053H123Q117 1053 117 1047Z" fill="#fff"/>
<text x="124.500" y="1045" textLength="70.500" lengthAdjust="spacingAndGlyphs" style="font-size:14px;fill:#222">来場者名簿</text>
<rect x="124.500" y="1047.500" width="70.500" height="2.500" fill="#107c41"/>
<path d="M207.500 1032V1050" stroke="#c8c8c8"/>
<path d="M249.500 1040.500H261M255 1035V1046.500" stroke="#333" stroke-width="1"/>
<path d="M1155.500 1036.500V1038M1155.500 1040V1041.500M1155.500 1043.500V1045" stroke="#444" stroke-width="1.600"/>
<rect x="1171" y="1032" width="729" height="17" rx="6" fill="#f5f5f5"/>
<path d="M1175 1041 1182 1037V1045Z" fill="#707070"/>
<rect x="1188" y="1036" width="667" height="9" rx="4.500" fill="#707070"/>
<path d="M1895 1041 1888 1036.500V1045.500Z" fill="#707070"/>

<!-- status bar -->
<path d="M1 1057.500H1919" stroke="#c8c8c8"/>
<text x="9" y="1072" textLength="48" lengthAdjust="spacingAndGlyphs" style="font-size:12px">準備完了</text>
<rect x="76.500" y="1062.500" width="12.500" height="11" fill="none" stroke="#444"/><path d="M78.500 1065.500H87M78.500 1068H82" stroke="#444"/><circle cx="85.500" cy="1071" r="4" fill="#efefef" stroke="#333"/><circle cx="85.500" cy="1071" r="1.700" fill="#333"/>
<rect x="1602.500" y="1058" width="39.500" height="21" fill="#dcdcdc"/>
<path d="M1616 1061.500H1628V1074H1616ZM1620 1061.500V1074M1624 1061.500V1074M1616 1065.500H1628M1616 1069.500H1628" fill="none" stroke="#333"/>
<path d="M1656 1061.500H1669V1074H1656ZM1659 1064.500H1666V1071H1659ZM1660.500 1066.500H1664.500M1660.500 1068.500H1664.500" fill="none" stroke="#333"/>
<path d="M1696 1061.500H1709V1074H1696ZM1696 1069H1702V1061.500M1699 1061.500V1069" fill="none" stroke="#333"/>
<path d="M1728 1068H1735" stroke="#333" stroke-width="1.200"/>
<path d="M1741 1068.500H1841" stroke="#777"/>
<rect x="1789" y="1063" width="5" height="11" fill="#666"/>
<path d="M1846 1068.500H1854M1850 1064.500V1072.500" stroke="#333"/>
<text x="1868" y="1072.500" textLength="32" lengthAdjust="spacingAndGlyphs" style="font-size:12px">100%</text>

<!-- annotations -->
<rect x="190.500" y="5.500" width="45.500" height="41.500" rx="5" fill="none" stroke="#f00" stroke-width="6"/>
<g filter="url(#sh)"><path fill-rule="evenodd" d="M242 55.500a22.500 22.500 0 1 0 45 0a22.500 22.500 0 1 0-45 0ZM246 55.500a18 18 0 1 1 36 0a18 18 0 1 1-36 0Z" fill="#fff"/></g>
<circle cx="264.500" cy="55.500" r="18" fill="#fff" fill-opacity=".82"/>
<circle cx="264.500" cy="55.500" r="19" fill="none" stroke="#f00" stroke-width="2.200"/>
<path d="M253 46.500H259.500V69H254.500V52.500H251.500V48.500C252.200 48.200 252.700 47.500 253 46.500Z M269 46.500H275.500V69H270.500V52.500H267.500V48.500C268.200 48.200 268.700 47.500 269 46.500Z" fill="none" stroke="#fff" stroke-width="3" opacity="0"/>
<text x="250.500" y="69.500" textLength="28" lengthAdjust="spacingAndGlyphs" style="font-size:37px;font-weight:bold;fill:#f00;stroke:#fff;stroke-width:1.500px;paint-order:stroke">11</text>
</svg>
</body></html>
